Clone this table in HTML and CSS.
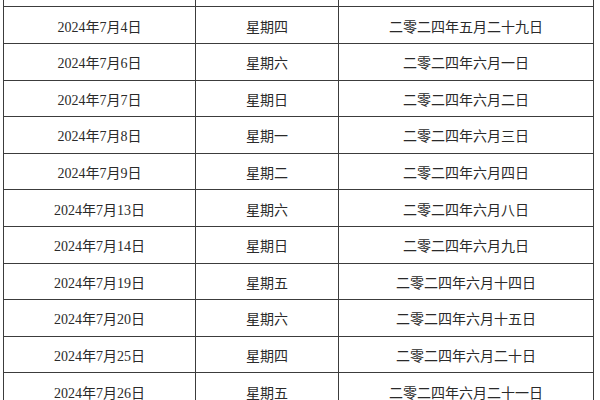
FILE: index.html
```html
<!DOCTYPE html>
<html lang="zh">
<head>
<meta charset="utf-8">
<title>2024年7月日期表</title>
<link rel="stylesheet" href="styles.css">
</head>
<body>
<div class="table">
  <div class="cell"></div><div class="cell"></div><div class="cell"></div>
  <div class="cell">2024年7月4日</div><div class="cell">星期四</div><div class="cell">二零二四年五月二十九日</div>
  <div class="cell">2024年7月6日</div><div class="cell">星期六</div><div class="cell">二零二四年六月一日</div>
  <div class="cell">2024年7月7日</div><div class="cell">星期日</div><div class="cell">二零二四年六月二日</div>
  <div class="cell">2024年7月8日</div><div class="cell">星期一</div><div class="cell">二零二四年六月三日</div>
  <div class="cell">2024年7月9日</div><div class="cell">星期二</div><div class="cell">二零二四年六月四日</div>
  <div class="cell">2024年7月13日</div><div class="cell">星期六</div><div class="cell">二零二四年六月八日</div>
  <div class="cell">2024年7月14日</div><div class="cell">星期日</div><div class="cell">二零二四年六月九日</div>
  <div class="cell">2024年7月19日</div><div class="cell">星期五</div><div class="cell">二零二四年六月十四日</div>
  <div class="cell">2024年7月20日</div><div class="cell">星期六</div><div class="cell">二零二四年六月十五日</div>
  <div class="cell">2024年7月25日</div><div class="cell">星期四</div><div class="cell">二零二四年六月二十日</div>
  <div class="cell">2024年7月26日</div><div class="cell">星期五</div><div class="cell">二零二四年六月二十一日</div>
</div>
</body>
</html>
```
FILE: styles.css
```css
html, body {
  margin: 0;
  padding: 0;
  background: #ffffff;
  overflow: hidden;
}

.table {
  display: grid;
  grid-template-columns: 192px 143px 255px;
  grid-auto-rows: 36.6px;
  margin-left: 3px;
  margin-top: -29.2px;
  border-left: 1px solid #3c3c3c;
  width: max-content;
  font-family: "Liberation Serif", "Noto Sans CJK SC", sans-serif;
  font-size: 14px;
  color: #2a2a2a;
}

.cell {
  box-sizing: border-box;
  border-right: 1px solid #3c3c3c;
  border-bottom: 1px solid #3c3c3c;
  display: flex;
  align-items: center;
  justify-content: center;
  padding-top: 1px;
}
```
